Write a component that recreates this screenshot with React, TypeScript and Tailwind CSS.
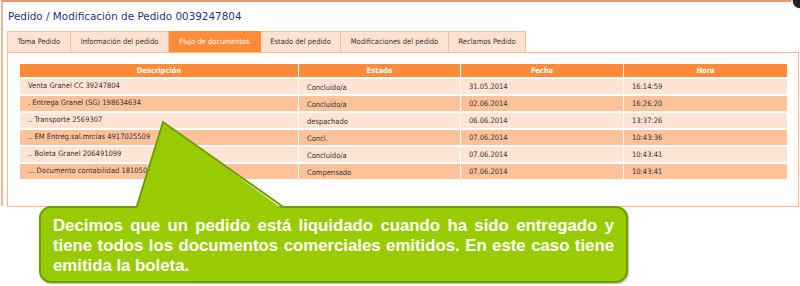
import React from 'react';

interface Row {
  desc: string;
  estado: string;
  fecha: string;
  hora: string;
}

const tabs = [
  { label: 'Toma Pedido', w: 'w-[64px]' },
  { label: 'Información del pedido', w: 'w-[98px]' },
  { label: 'Flujo de documentos', w: 'w-[92px]', active: true },
  { label: 'Estado del pedido', w: 'w-[80px]' },
  { label: 'Modificaciones del pedido', w: 'w-[108px]' },
  { label: 'Reclamos Pedido', w: 'w-[77px]' },
];

const rows: Row[] = [
  { desc: 'Venta Granel CC 39247804', estado: 'Concluido/a', fecha: '31.05.2014', hora: '16:14:59' },
  { desc: '. Entrega Granel (SG) 198634634', estado: 'Concluido/a', fecha: '02.06.2014', hora: '16:26:20' },
  { desc: '.. Transporte 2569307', estado: 'despachado', fecha: '06.06.2014', hora: '13:37:26' },
  { desc: '.. EM Entreg.sal.mrcías 4917025509', estado: 'Concl.', fecha: '07.06.2014', hora: '10:43:36' },
  { desc: '.. Boleta Granel 206491099', estado: 'Concluido/a', fecha: '07.06.2014', hora: '10:43:41' },
  { desc: '... Documento contabilidad 1810504862', estado: 'Compensado', fecha: '07.06.2014', hora: '10:43:41' },
];

const small = "font-['DejaVu_Sans_Condensed','DejaVu_Sans',sans-serif]";

export default function App() {
  return (
    <div className="relative w-[800px] h-[286px] overflow-hidden bg-white">
      {/* Dialog */}
      <div className="ml-[1px] h-[206px] border-l-2 border-t-2 border-l-[#f1b797] border-t-[#e8956b] pl-[4px] pr-[1px] pt-[7px]">
        <h1 className="h-[22px] pl-[1px] text-[10.4px] leading-[14px] font-medium text-[#2f2f80] font-['DejaVu_Sans',sans-serif]">
          Pedido / Modificación de Pedido 0039247804
        </h1>

        {/* Tabs */}
        <div className={`flex h-[21px] ${small}`}>
          {tabs.map((t, i) => (
            <div
              key={t.label}
              className={`${t.w} flex items-center justify-center text-[7.5px] border-r border-t ${i === 0 ? 'border-l' : ''} ${
                t.active
                  ? 'bg-[#ff8b38] text-white border-[#ff8b38]'
                  : 'bg-[#fde2d1] text-[#333] border-[#f6bd9b]'
              }`}
            >
              {t.label}
            </div>
          ))}
        </div>

        {/* Panel */}
        <div className="h-[155px] border border-[#fbb68c] pl-[11px] pt-[9px]">
          <table className={`w-[769px] border-separate border-spacing-x-[1px] border-spacing-y-[2px] text-[7.5px] text-[#333] ${small}`}>
            <thead>
              <tr className="h-[13px] bg-[#ff8b38] text-white font-bold">
                <th className="w-[278px] font-bold">Descripción</th>
                <th className="w-[161px] font-bold">Estado</th>
                <th className="w-[162px] font-bold">Fecha</th>
                <th className="font-bold">Hora</th>
              </tr>
            </thead>
            <tbody>
              {rows.map((r, i) => (
                <tr key={i} className={`h-[15px] ${i % 2 === 0 ? 'bg-[#fde4d4]' : 'bg-[#fdc29a]'}`}>
                  <td className="pl-[8px] pb-[2px]">{r.desc}</td>
                  <td className="pl-[8px] pt-[2px]">{r.estado}</td>
                  <td className="pl-[8px] pt-[1px]">{r.fecha}</td>
                  <td className="pl-[8px] pt-[1px]">{r.hora}</td>
                </tr>
              ))}
            </tbody>
          </table>
        </div>
      </div>

      {/* Close button, clipped at the corner */}
      <svg className="absolute right-[-9px] top-[-8px]" width="18" height="18" viewBox="0 0 18 18">
        <circle cx="9" cy="9" r="8" fill="#222" stroke="#fff" strokeWidth="1.5" />
      </svg>

      {/* Callout */}
      <div className="absolute left-[39px] top-[206px] w-[589px] h-[77px] rounded-[12px] bg-[#99cc00] border-2 border-[#6f9e00] pl-[12px] pr-[12px] pt-[8px] shadow-[1px_1px_2px_rgba(0,0,0,0.25)]">
        <p className="text-white font-bold text-[16.8px] leading-[20px] text-justify [text-align-last:left] font-['Liberation_Sans',Arial,sans-serif]">
          Decimos que un pedido está liquidado cuando ha sido entregado y tiene todos los documentos comerciales emitidos. En este caso tiene emitida la boleta.
        </p>
      </div>
      <svg className="absolute left-0 top-0" width="800" height="286" viewBox="0 0 800 286">
        <polygon points="136,210 163,122 284,210" fill="#99cc00" />
        <polyline points="136.5,207.5 163,122 284,207.5" fill="none" stroke="#6f9e00" strokeWidth="2" strokeLinejoin="miter" />
      </svg>
    </div>
  );
}
